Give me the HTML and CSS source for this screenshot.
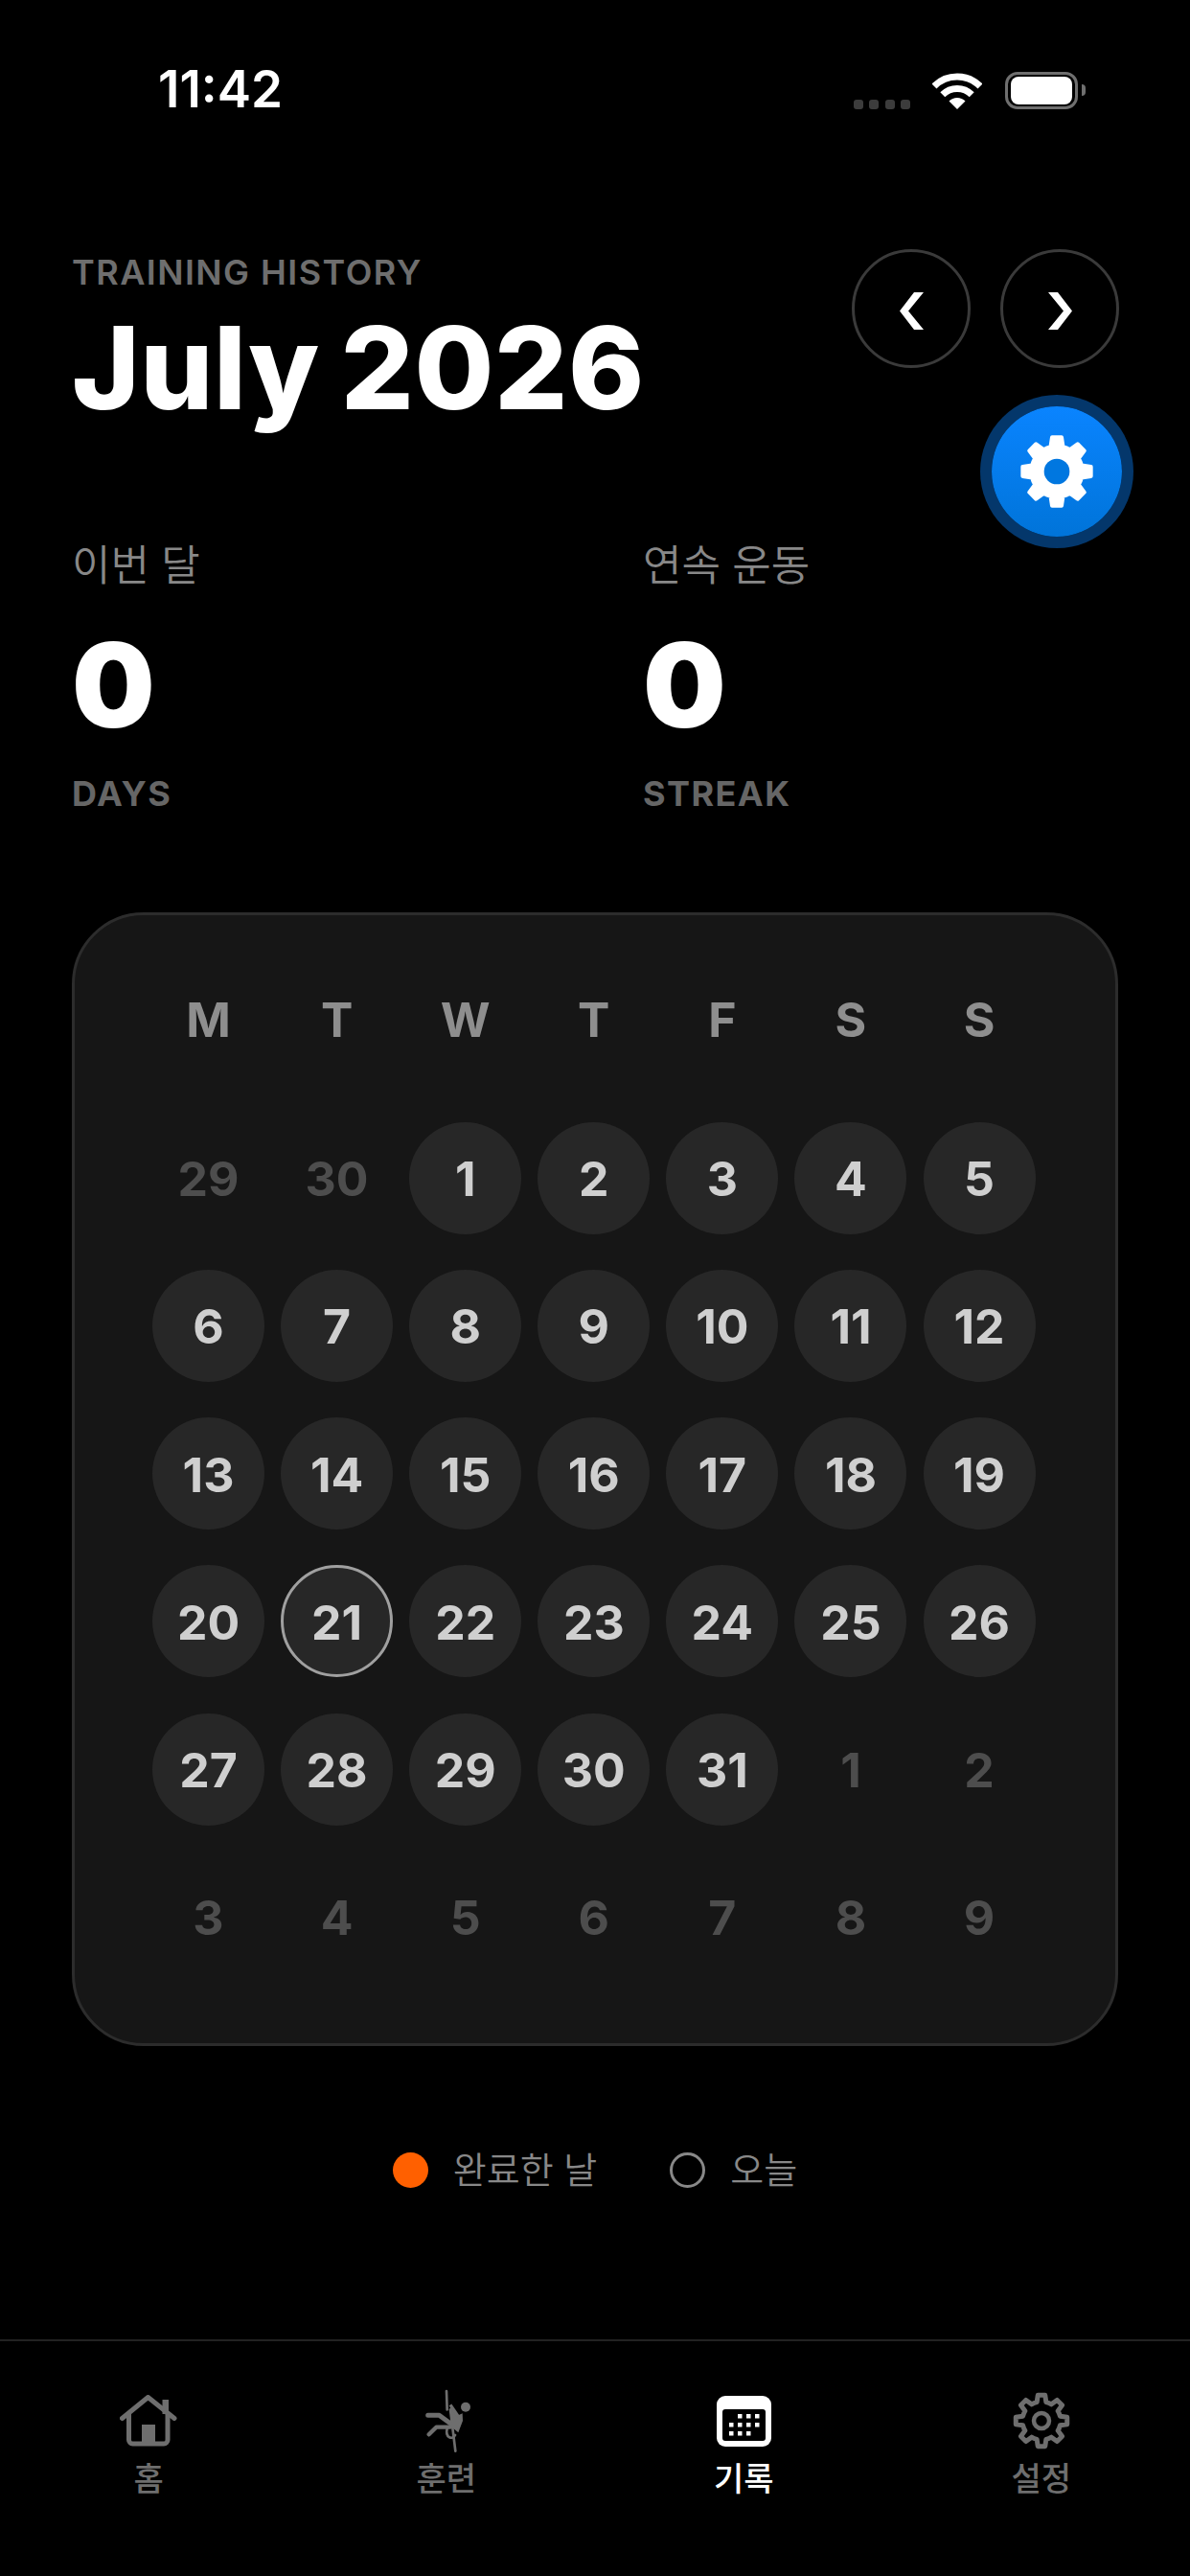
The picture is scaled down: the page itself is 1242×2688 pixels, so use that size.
FILE: index.html
```html
<!DOCTYPE html>
<html lang="ko">
<head>
    <meta charset="UTF-8">
    <meta name="viewport" content="width=device-width, initial-scale=1.0">
    <title>Training History</title>
    <link rel="stylesheet" href="styles.css">
</head>
<body>
    <svg class="defs" width="0" height="0">
        <defs>
            <path id="gearShape" d="M-3.76 -26.74L3.76 -26.74L4.84 -19.41A20 20 0 0 1 10.3 -17.14L16.25 -21.56L21.56 -16.25L17.14 -10.3A20 20 0 0 1 19.41 -4.84L26.74 -3.76L26.74 3.76L19.41 4.84A20 20 0 0 1 17.14 10.3L21.56 16.25L16.25 21.56L10.3 17.14A20 20 0 0 1 4.84 19.41L3.76 26.74L-3.76 26.74L-4.84 19.41A20 20 0 0 1 -10.3 17.14L-16.25 21.56L-21.56 16.25L-17.14 10.3A20 20 0 0 1 -19.41 4.84L-26.74 3.76L-26.74 -3.76L-19.41 -4.84A20 20 0 0 1 -17.14 -10.3L-21.56 -16.25L-16.25 -21.56L-10.3 -17.14A20 20 0 0 1 -4.84 -19.41Z"/>
        </defs>
    </svg>

    <div class="screen">
        <div class="status-bar">
            <span class="time">11:42</span>
            <div class="status-icons">
                <div class="signal"><i></i><i></i><i></i><i></i></div>
                <svg class="wifi" width="52" height="38" viewBox="0 0 52 38">
                    <path d="M2 14A34 34 0 0 1 50 14" fill="none" stroke="#fff" stroke-width="7"/>
                    <path d="M10.8 22.8A21.5 21.5 0 0 1 41.2 22.8" fill="none" stroke="#fff" stroke-width="7"/>
                    <path d="M26 38L17.5 29.5A12 12 0 0 1 34.5 29.5Z" fill="#fff"/>
                </svg>
                <div class="battery"><div class="battery-level"></div></div>
                <div class="battery-nub"></div>
            </div>
        </div>

        <header class="page-header">
            <div>
                <div class="eyebrow">TRAINING HISTORY</div>
                <h1 class="month">July 2026</h1>
            </div>
            <div class="month-nav">
                <button class="nav-btn" aria-label="Previous month">
                    <svg width="25" height="39" viewBox="0 0 25 39"><polygon points="15,0 25,0 9,19.5 25,39 15,39 0,19.5" fill="#fff"/></svg>
                </button>
                <button class="nav-btn" aria-label="Next month">
                    <svg width="25" height="39" viewBox="0 0 25 39"><polygon points="10,0 0,0 16,19.5 0,39 10,39 25,19.5" fill="#fff"/></svg>
                </button>
            </div>
        </header>

        <button class="fab" aria-label="Settings">
            <svg width="80" height="80" viewBox="-30 -30 60 60">
                <use href="#gearShape" fill="#fff" stroke="#fff" stroke-width="3" stroke-linejoin="round"/>
                <circle r="10" fill="#0077e0"/>
            </svg>
        </button>

        <section class="stats">
            <div class="stat">
                <div class="stat-label">이번 달</div>
                <div class="stat-value">0</div>
                <div class="stat-unit">DAYS</div>
            </div>
            <div class="stat">
                <div class="stat-label">연속 운동</div>
                <div class="stat-value">0</div>
                <div class="stat-unit">STREAK</div>
            </div>
        </section>

        <section class="calendar">
            <div class="weekdays">
                <span>M</span><span>T</span><span>W</span><span>T</span><span>F</span><span>S</span><span>S</span>
            </div>
            <div class="days">
                <div class="day muted">29</div>
                <div class="day muted">30</div>
                <div class="day">1</div>
                <div class="day">2</div>
                <div class="day">3</div>
                <div class="day">4</div>
                <div class="day">5</div>
                <div class="day">6</div>
                <div class="day">7</div>
                <div class="day">8</div>
                <div class="day">9</div>
                <div class="day">10</div>
                <div class="day">11</div>
                <div class="day">12</div>
                <div class="day">13</div>
                <div class="day">14</div>
                <div class="day">15</div>
                <div class="day">16</div>
                <div class="day">17</div>
                <div class="day">18</div>
                <div class="day">19</div>
                <div class="day">20</div>
                <div class="day today">21</div>
                <div class="day">22</div>
                <div class="day">23</div>
                <div class="day">24</div>
                <div class="day">25</div>
                <div class="day">26</div>
                <div class="day">27</div>
                <div class="day">28</div>
                <div class="day">29</div>
                <div class="day">30</div>
                <div class="day">31</div>
                <div class="day muted">1</div>
                <div class="day muted">2</div>
                <div class="day muted">3</div>
                <div class="day muted">4</div>
                <div class="day muted">5</div>
                <div class="day muted">6</div>
                <div class="day muted">7</div>
                <div class="day muted">8</div>
                <div class="day muted">9</div>
            </div>
        </section>

        <div class="legend">
            <div class="legend-item"><span class="dot done"></span>완료한 날</div>
            <div class="legend-item"><span class="dot ring"></span>오늘</div>
        </div>

        <nav class="tab-bar">
            <div class="tab">
                <div class="tab-icon">
                    <svg width="60" height="54" viewBox="0 0 60 54">
                        <path d="M2.5 24.5L29.5 2.5L57 24.5" fill="none" stroke="currentColor" stroke-width="5" stroke-linecap="round" stroke-linejoin="round"/>
                        <path d="M9.5 20V47A4 4 0 0 0 13.5 51H46A4 4 0 0 0 50 47V20" fill="none" stroke="currentColor" stroke-width="5"/>
                        <rect x="23" y="31" width="14" height="20" fill="currentColor"/>
                        <rect x="44.5" y="5" width="6.5" height="15" fill="currentColor"/>
                    </svg>
                </div>
                <span>홈</span>
            </div>
            <div class="tab">
                <div class="tab-icon">
                    <svg width="50" height="70" viewBox="120 30 150 210">
                        <path d="M195 42L197 100M207 100L223 230" fill="none" stroke="currentColor" stroke-width="8" stroke-linecap="round"/>
                        <circle cx="255" cy="92" r="15" fill="currentColor"/>
                        <path d="M207 85L232 118L245 112L246 135L232 172L205 150L210 130Z" fill="currentColor"/>
                        <path d="M207 85L232 122" fill="none" stroke="currentColor" stroke-width="10"/>
                        <path d="M137 118H172L205 142" fill="none" stroke="currentColor" stroke-width="15" stroke-linecap="round" stroke-linejoin="round"/>
                        <path d="M140 178L163 155H205" fill="none" stroke="currentColor" stroke-width="13" stroke-linecap="round" stroke-linejoin="round"/>
                        <path d="M197 160C190 190 215 195 222 180" fill="none" stroke="currentColor" stroke-width="8" stroke-linecap="round"/>
                    </svg>
                </div>
                <span>훈련</span>
            </div>
            <div class="tab active">
                <div class="tab-icon">
                    <svg width="57" height="53" viewBox="0 0 57 53">
                        <rect width="57" height="53" rx="9" fill="#fff"/>
                        <rect x="6" y="14" width="45" height="33" rx="3" fill="#000"/>
                        <g fill="#fff">
                            <rect x="22" y="19" width="4.5" height="4.5"/><rect x="31" y="19" width="4.5" height="4.5"/><rect x="40" y="19" width="4.5" height="4.5"/>
                            <rect x="13" y="28" width="4.5" height="4.5"/><rect x="22" y="28" width="4.5" height="4.5"/><rect x="31" y="28" width="4.5" height="4.5"/><rect x="40" y="28" width="4.5" height="4.5"/>
                            <rect x="13" y="37" width="4.5" height="4.5"/><rect x="22" y="37" width="4.5" height="4.5"/><rect x="31" y="37" width="4.5" height="4.5"/>
                        </g>
                    </svg>
                </div>
                <span>기록</span>
            </div>
            <div class="tab">
                <div class="tab-icon">
                    <svg width="60" height="60" viewBox="-30 -30 60 60">
                        <use href="#gearShape" fill="none" stroke="currentColor" stroke-width="5" stroke-linejoin="round"/>
                        <circle r="8" fill="none" stroke="currentColor" stroke-width="4.5"/>
                    </svg>
                </div>
                <span>설정</span>
            </div>
        </nav>
    </div>
</body>
</html>
```

FILE: styles.css
```css
* {
    box-sizing: border-box;
}
html, body {
    margin: 0;
    background: #000;
}
body {
    font-family: Inter, "Noto Sans CJK KR", sans-serif;
    color: #fff;
}
.defs {
    position: absolute;
}
.screen {
    position: relative;
    width: 1242px;
    height: 2688px;
    display: flex;
    flex-direction: column;
    overflow: hidden;
}

/* status bar */
.status-bar {
    height: 114px;
    padding: 69px 109px 0 165px;
    display: flex;
    justify-content: space-between;
    align-items: flex-end;
}
.time {
    margin-bottom: -3px;
    font-size: 53px;
    font-weight: 600;
    line-height: 48px;
}
.status-icons {
    display: flex;
    align-items: flex-end;
}
.signal {
    display: flex;
    gap: 6.5px;
    margin-right: 23px;
}
.signal i {
    width: 10px;
    height: 10px;
    border-radius: 3px;
    background: #3c3c3c;
}
.wifi {
    margin-right: 24px;
}
.battery {
    width: 76px;
    height: 39px;
    padding: 2px 3px;
    border: 3px solid #6f6f6f;
    border-radius: 13px;
}
.battery-level {
    height: 100%;
    background: #fff;
    border-radius: 8px;
}
.battery-nub {
    width: 4px;
    height: 12px;
    margin: 0 0 14px 4px;
    background: #6f6f6f;
    border-radius: 0 6px 6px 0;
}

/* header */
.page-header {
    margin-top: 146px;
    padding: 0 74px 0 75px;
    display: flex;
    justify-content: space-between;
    align-items: flex-start;
}
.eyebrow {
    font-size: 36px;
    font-weight: 600;
    line-height: 48px;
    letter-spacing: 1.44px;
    color: #6e6e6e;
}
.month {
    margin: 11px 0 0;
    font-size: 120px;
    font-weight: 800;
    line-height: 130px;
    letter-spacing: 0.5px;
    word-spacing: -5px;
}
.month-nav {
    display: flex;
    gap: 31px;
}
.nav-btn {
    width: 124px;
    height: 124px;
    padding: 4px 0 0;
    display: flex;
    align-items: center;
    justify-content: center;
    background: none;
    border: 3px solid #3a3a3a;
    border-radius: 50%;
}
.fab {
    position: absolute;
    left: 1023px;
    top: 412px;
    width: 160px;
    height: 160px;
    padding: 0;
    display: flex;
    align-items: center;
    justify-content: center;
    background: linear-gradient(#0a84ff, #0074d9);
    background-clip: padding-box;
    border: 12px solid rgba(10, 132, 255, 0.42);
    border-radius: 50%;
}

/* stats */
.stats {
    margin-top: 111px;
    padding-left: 75px;
    display: grid;
    grid-template-columns: 596px 1fr;
}
.stat-label {
    font-size: 44px;
    font-weight: 350;
    line-height: 60px;
    color: #888;
}
.stat-value {
    margin-top: 30px;
    font-size: 122px;
    font-weight: 900;
    line-height: 130px;
}
.stat-unit {
    margin-top: 24px;
    font-size: 36px;
    font-weight: 700;
    line-height: 48px;
    letter-spacing: 1.44px;
    color: #666;
}

/* calendar */
.calendar {
    width: 1092px;
    height: 1183px;
    margin: 100px 0 0 75px;
    padding: 79px 81px 0;
    background: #161616;
    border: 3px solid #2c2c2c;
    border-radius: 75px;
}
.weekdays,
.days {
    display: grid;
    grid-template-columns: repeat(7, 117px);
    column-gap: 17.1px;
}
.weekdays {
    margin-bottom: 76.5px;
    font-size: 50px;
    font-weight: 700;
    line-height: 60px;
    text-align: center;
    color: #8e8e8e;
}
.days {
    row-gap: 37.3px;
}
.day {
    height: 117px;
    padding-top: 2px;
    display: flex;
    align-items: center;
    justify-content: center;
    font-size: 50px;
    font-weight: 700;
    color: #cfcfcf;
    background: #272727;
    border-radius: 50%;
}
.day.muted {
    color: #4d4d4d;
    background: none;
}
.day.today {
    border: 3px solid #a0a0a0;
}

/* legend */
.legend {
    margin-top: 99px;
    display: flex;
    justify-content: center;
    gap: 76px;
    font-size: 38px;
    font-weight: 350;
    line-height: 60px;
    color: #888;
}
.legend-item {
    display: flex;
    align-items: center;
    gap: 26px;
}
.dot {
    width: 37px;
    height: 37px;
    border-radius: 50%;
}
.dot.done {
    background: #ff6000;
}
.dot.ring {
    border: 3px solid #888;
}

/* tab bar */
.tab-bar {
    margin-top: auto;
    height: 247px;
    padding-top: 51px;
    display: grid;
    grid-template-columns: repeat(4, 1fr);
    border-top: 2px solid #222;
}
.tab {
    display: flex;
    flex-direction: column;
    align-items: center;
    font-size: 34px;
    font-weight: 500;
    line-height: 40px;
    color: #6e6e6e;
}
.tab.active {
    color: #fff;
}
.tab-icon {
    height: 64px;
    margin-bottom: 9px;
    display: flex;
    align-items: center;
    justify-content: center;
}
```
